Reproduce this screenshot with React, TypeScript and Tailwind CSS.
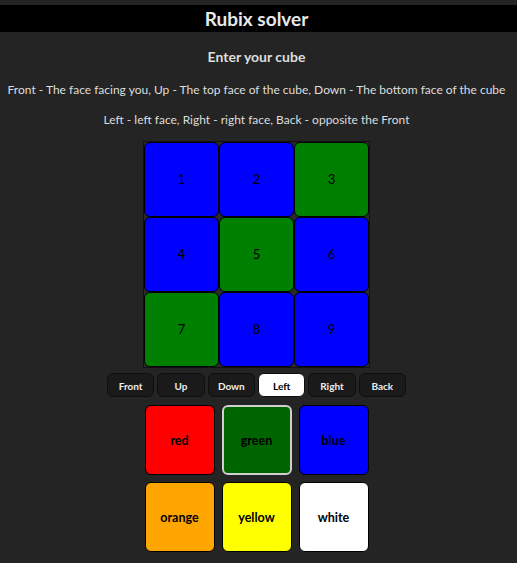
import { useState } from "react";

const faces = ["Front", "Up", "Down", "Left", "Right", "Back"];

const cubeColors: Record<string, string> = {
  blue: "bg-[#0000ff]",
  green: "bg-[#008000]",
};

const stickers = ["blue", "blue", "green", "blue", "green", "blue", "green", "blue", "blue"];

const palette = [
  { name: "red", cls: "bg-[#ff0000]" },
  { name: "green", cls: "bg-[#006400]" },
  { name: "blue", cls: "bg-[#0000ff]" },
  { name: "orange", cls: "bg-[#ffa500]" },
  { name: "yellow", cls: "bg-[#ffff00]" },
  { name: "white", cls: "bg-white" },
];

export default function App() {
  const [face, setFace] = useState("Left");
  const [color, setColor] = useState("green");

  return (
    <div className="min-h-screen bg-[#242424] text-[#dedede] font-['Lato',sans-serif] pt-[5px]">
      {/* Header */}
      <header className="bg-black h-[27px] flex items-center justify-center pr-[4px]">
        <h1 className="text-[19px] font-bold leading-none text-[#e8e8e8]">Rubix solver</h1>
      </header>

      <main className="flex flex-col items-center pr-[4px]">
        <h2 className="mt-[17px] text-[14px] font-bold leading-[16px]">Enter your cube</h2>
        <p className="mt-[17px] text-[12px] leading-[16px] whitespace-nowrap">
          Front - The face facing you, Up - The top face of the cube, Down - The bottom face of the cube
        </p>
        <p className="mt-[14px] text-[12px] leading-[16px] whitespace-nowrap">
          Left - left face, Right - right face, Back - opposite the Front
        </p>

        {/* Cube face */}
        <div className="mt-[13px] border border-[#111] bg-[#2a2a2a] grid grid-cols-3">
          {stickers.map((c, i) => (
            <div
              key={i}
              className={`w-[75px] h-[75px] rounded-[6px] border border-black flex items-center justify-center text-black text-[13px] ${cubeColors[c]}`}
            >
              {i + 1}
            </div>
          ))}
        </div>

        {/* Face selector */}
        <div className="mt-[5px] grid grid-cols-6 gap-[3px] w-[299px]">
          {faces.map((f) => (
            <button
              key={f}
              onClick={() => setFace(f)}
              className={`h-[24px] pt-[2px] rounded-[6px] border border-[#0e0e0e] text-[10px] font-bold ${
                face === f ? "bg-white text-black" : "bg-[#1a1a1a] text-[#ececec]"
              }`}
            >
              {f}
            </button>
          ))}
        </div>

        {/* Colour picker */}
        <div className="mt-[8px] grid grid-cols-3 gap-[7px]">
          {palette.map((p) => (
            <button
              key={p.name}
              onClick={() => setColor(p.name)}
              className={`w-[70px] h-[70px] pt-[3px] rounded-[6px] flex items-center justify-center text-black text-[12.5px] font-bold ${p.cls} ${
                color === p.name ? "border-2 border-[#cfcfcf]" : "border border-black"
              }`}
            >
              {p.name}
            </button>
          ))}
        </div>
      </main>
    </div>
  );
}
